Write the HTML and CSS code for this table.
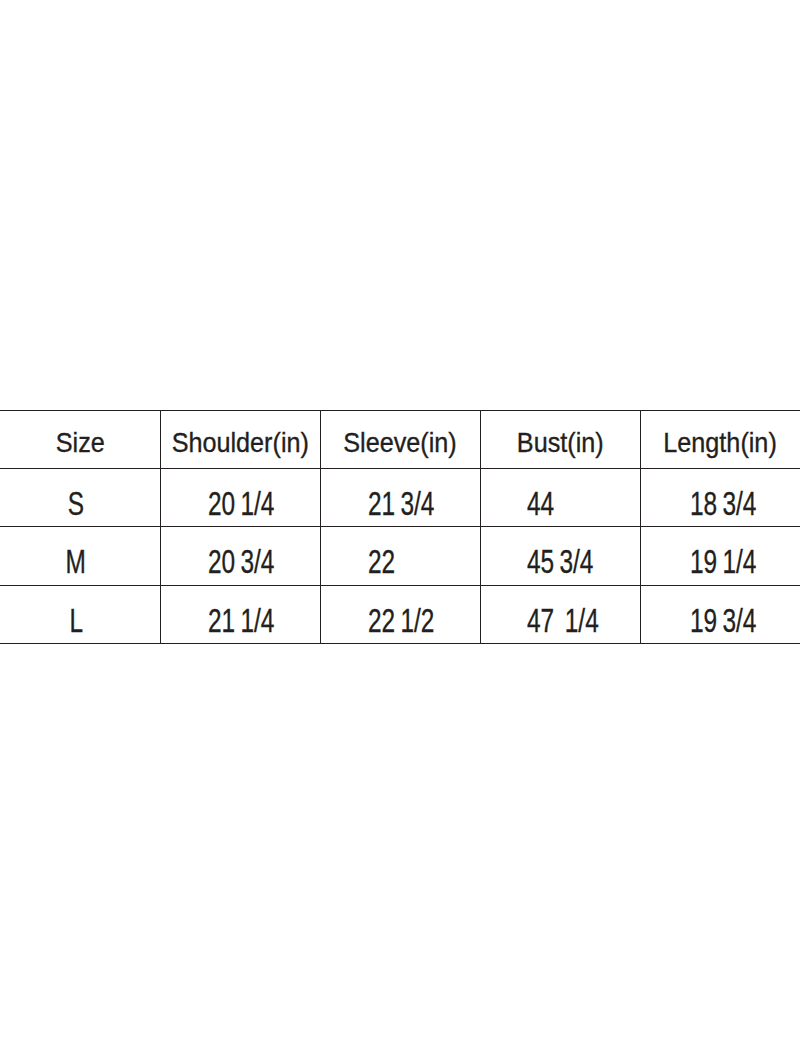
FILE: index.html
```html
<!DOCTYPE html>
<html>
<head>
<meta charset="utf-8">
<link rel="stylesheet" href="styles.css">
</head>
<body>
<div class="sheet">
  <div class="size-table">
    <div class="cell head c1"><span class="txt">Size</span></div>
    <div class="cell head c2"><span class="txt">Shoulder(in)</span></div>
    <div class="cell head c3"><span class="txt">Sleeve(in)</span></div>
    <div class="cell head c4"><span class="txt">Bust(in)</span></div>
    <div class="cell head c5"><span class="txt">Length(in)</span></div>

    <div class="cell data c1"><span class="txt size">S</span></div>
    <div class="cell data c2"><span class="txt">20 1/4</span></div>
    <div class="cell data c3"><span class="txt">21 3/4</span></div>
    <div class="cell data c4"><span class="txt">44</span></div>
    <div class="cell data c5"><span class="txt">18 3/4</span></div>

    <div class="cell data c1"><span class="txt size">M</span></div>
    <div class="cell data c2"><span class="txt">20 3/4</span></div>
    <div class="cell data c3"><span class="txt">22</span></div>
    <div class="cell data c4"><span class="txt">45 3/4</span></div>
    <div class="cell data c5"><span class="txt">19 1/4</span></div>

    <div class="cell data c1"><span class="txt size">L</span></div>
    <div class="cell data c2"><span class="txt">21 1/4</span></div>
    <div class="cell data c3"><span class="txt">22 1/2</span></div>
    <div class="cell data c4"><span class="txt">47&nbsp; 1/4</span></div>
    <div class="cell data c5"><span class="txt">19 3/4</span></div>
  </div>
</div>
</body>
</html>
```
FILE: styles.css
```css
html, body {
  margin: 0;
  padding: 0;
  background: #ffffff;
}

.sheet {
  width: 800px;
  height: 1050px;
  padding-top: 410px;
  box-sizing: border-box;
}

.size-table {
  display: grid;
  grid-template-columns: 160px 160px 160px 160px 160px;
  grid-template-rows: 58px 58px 59px 58px;
  border-top: 1px solid #231f20;
  font-family: "Liberation Sans", Arial, sans-serif;
  color: #231f20;
}

.cell {
  border-bottom: 1px solid #231f20;
  border-left: 1px solid #231f20;
  display: flex;
  align-items: center;
  box-sizing: border-box;
}

.cell.c1 {
  border-left: none;
}

.txt {
  display: inline-block;
  line-height: 1;
  white-space: nowrap;
  -webkit-text-stroke: 0.35px #231f20;
}

.head {
  justify-content: center;
  font-size: 28px;
  padding-top: 6px;
}

.head .txt {
  transform: scaleX(0.9);
  transform-origin: center;
}

.data {
  font-size: 33px;
  padding-top: 11px;
}

.data .txt {
  word-spacing: -2px;
  transform: scaleX(0.74);
  transform-origin: left center;
}

.data.c1 {
  justify-content: center;
}

.data.c1 .txt {
  transform-origin: center;
  margin-left: -8px;
}

.data.c2 { padding-left: 47px; }
.data.c3 { padding-left: 47px; }
.data.c4 { padding-left: 46px; }
.data.c5 { padding-left: 49px; }
```
